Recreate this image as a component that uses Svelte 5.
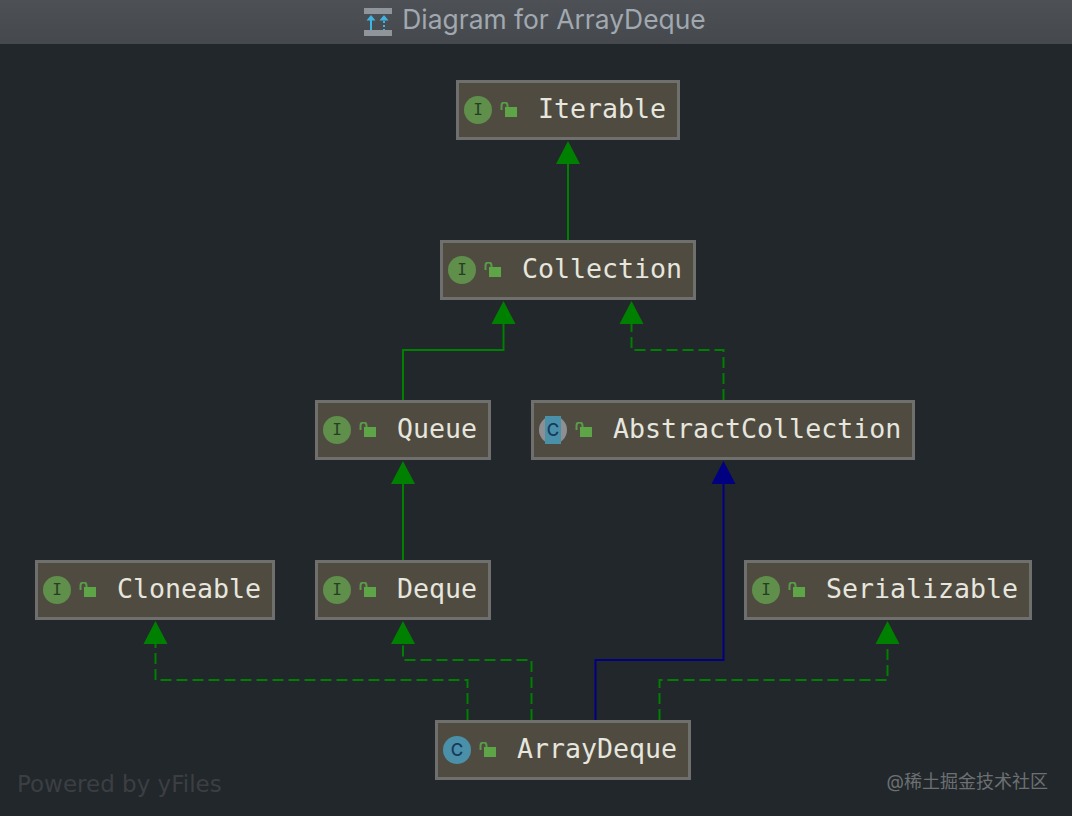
<script lang="ts">
  const GREEN = '#008000'
  const NAVY = '#000080'

  const nodes = [
    { name: 'Iterable', kind: 'i', x: 456, y: 80 },
    { name: 'Collection', kind: 'i', x: 440, y: 240 },
    { name: 'Queue', kind: 'i', x: 315, y: 400 },
    { name: 'AbstractCollection', kind: 'a', x: 531, y: 400 },
    { name: 'Cloneable', kind: 'i', x: 35, y: 560 },
    { name: 'Deque', kind: 'i', x: 315, y: 560 },
    { name: 'Serializable', kind: 'i', x: 744, y: 560 },
    { name: 'ArrayDeque', kind: 'c', x: 435, y: 720 }
  ]

  // each edge: polyline points, the last point is the arrow tip
  const edges = [
    { pts: [[568, 240], [568, 140]], color: GREEN },
    { pts: [[403, 400], [403, 350], [503.5, 350], [503.5, 300]], color: GREEN },
    { pts: [[723.5, 400], [723.5, 350], [631.5, 350], [631.5, 300]], color: GREEN, dashed: true },
    { pts: [[403, 560], [403, 460]], color: GREEN },
    { pts: [[595.5, 720], [595.5, 660], [723.5, 660], [723.5, 460]], color: NAVY },
    { pts: [[467.5, 720], [467.5, 680], [155.5, 680], [155.5, 620]], color: GREEN, dashed: true },
    { pts: [[531.5, 720], [531.5, 660], [403, 660], [403, 620]], color: GREEN, dashed: true },
    { pts: [[659.5, 720], [659.5, 680], [887.5, 680], [887.5, 620]], color: GREEN, dashed: true }
  ]

  function line(pts: number[][]) {
    const copy = pts.map((p) => [...p])
    copy[copy.length - 1][1] += 20
    return copy.map((p) => p.join(',')).join(' ')
  }

  function head(pts: number[][]) {
    const [x, y] = pts[pts.length - 1]
    return `${x},${y + 1} ${x + 12},${y + 24} ${x - 12},${y + 24}`
  }
</script>

<div class="window">
  <header class="title">
    <svg width="28" height="28" viewBox="0 0 28 28">
      <rect x="0" y="0" width="28" height="6" fill="#8f959b" />
      <rect x="0" y="22" width="28" height="6" fill="#8f959b" />
      <path d="M7 11v11" fill="none" stroke="#3fb4e4" stroke-width="2" />
      <path d="M7 7l-4.500 5.500h9zM20 7l-4.500 5.500h9z" fill="#3fb4e4" />
      <path d="M20 13v9" fill="none" stroke="#3fb4e4" stroke-width="2" stroke-dasharray="2 2" />
    </svg>
    <span class="title-text">Diagram for ArrayDeque</span>
  </header>

  <div class="canvas">
    <svg class="edges" width="1072" height="816" viewBox="0 0 1072 816">
      {#each edges as e}
        <polyline
          points={line(e.pts)}
          fill="none"
          stroke={e.color}
          stroke-width="2"
          stroke-dasharray={e.dashed ? '11 5' : undefined}
        />
        <polygon points={head(e.pts)} fill={e.color} />
      {/each}
    </svg>

    {#each nodes as n}
      <div class="node" style="left: {n.x}px; top: {n.y}px">
        {#if n.kind === 'i'}
          <span class="badge iface">I</span>
        {:else if n.kind === 'c'}
          <span class="badge klass">C</span>
        {:else}
          <span class="badge abstract"><span>C</span></span>
        {/if}
        <svg class="lock" width="17" height="16" viewBox="0 0 17 16">
          <path d="M1.500 8V3.500a3 3 0 0 1 6 0V6" fill="none" stroke="#5a9a48" stroke-width="2" />
          <rect x="5" y="5" width="12" height="10" fill="#5ea548" />
        </svg>
        <span class="label">{n.name}</span>
      </div>
    {/each}

    <div class="powered">Powered by yFiles</div>
    <div class="mark">@稀土掘金技术社区</div>
  </div>
</div>

<style>
  :global(body) {
    margin: 0;
    background: #22272b;
  }

  .window {
    width: 1072px;
    height: 816px;
    display: flex;
    flex-direction: column;
    overflow: hidden;
    background: #22272b;
  }

  .title {
    height: 44px;
    flex: none;
    display: flex;
    align-items: center;
    justify-content: center;
    gap: 10px;
    padding-right: 2px;
    background: linear-gradient(#4d5155, #45494e);
    color: #a1a8af;
    font: 26.400px/1 "Inter", "Liberation Sans", sans-serif;
    box-sizing: border-box;
  }

  .title-text {
    padding-bottom: 6px;
  }

  .canvas {
    position: relative;
    flex: 1;
  }

  .edges {
    position: absolute;
    left: 0;
    top: -44px;
  }

  .node {
    position: absolute;
    margin-top: -44px;
    height: 60px;
    box-sizing: border-box;
    display: flex;
    align-items: center;
    padding: 0 11px 0 5px;
    background: #4f4b40;
    border: 3px solid #6f706e;
  }

  .badge {
    width: 28px;
    height: 28px;
    flex: none;
    border-radius: 50%;
    display: flex;
    align-items: center;
    justify-content: center;
    font: 400 16px/1 "DejaVu Sans Mono", monospace;
  }

  .iface {
    background: #5f8f4b;
    color: #263e22;
  }

  .klass {
    background: #4a90a9;
    color: #17395c;
    font: 500 17px/1 "Inter", sans-serif;
  }

  .abstract {
    background: #8d8f92;
    color: #17395c;
    font: 500 17px/1 "Inter", sans-serif;
  }

  .abstract span {
    width: 16px;
    height: 28px;
    background: #4a90a9;
    display: flex;
    align-items: center;
    justify-content: center;
  }

  .lock {
    margin-left: 8px;
    flex: none;
  }

  .label {
    margin-left: 21px;
    padding-bottom: 2px;
    color: #e6e6de;
    font: 26.600px/1 "DejaVu Sans Mono", monospace;
    white-space: nowrap;
  }

  .powered {
    position: absolute;
    left: 17px;
    top: 725px;
    color: #3b3f43;
    font: 23px/30px "DejaVu Sans", sans-serif;
    white-space: nowrap;
  }

  .mark {
    position: absolute;
    right: 24px;
    top: 725px;
    color: #6c7072;
    font: 18px/26px "Inter", "Noto Sans CJK SC", sans-serif;
    white-space: nowrap;
  }
</style>
